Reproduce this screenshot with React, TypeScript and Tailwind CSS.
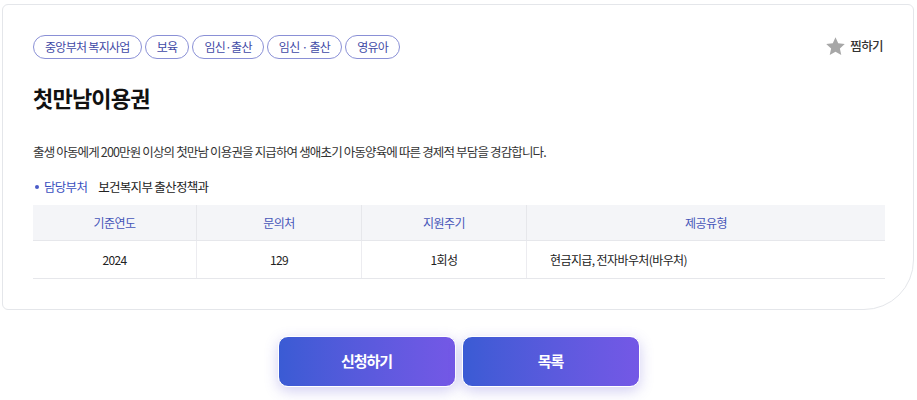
import React from "react";

const tags = ["중앙부처 복지사업", "보육", "임신·출산", "임신 · 출산", "영유아"];

export default function App() {
  return (
    <div
      className="w-[917px] h-[400px] bg-white overflow-hidden text-[#222]"
      style={{ fontFamily: '"Noto Sans CJK KR", "Noto Sans", sans-serif' }}
    >
      <div className="ml-[2px] mt-[4px] w-[912px] border border-[#e4e6ea] rounded-tl-[6px] rounded-tr-[6px] rounded-bl-[6px] rounded-br-[50px] bg-white pl-[30px] pr-[28px] pt-[30px] pb-[30px]">
        <div className="flex items-center justify-between">
          <div className="flex items-center gap-[3px]">
            {tags.map((t) => (
              <span
                key={t}
                className="h-[24px] flex items-center px-[11px] rounded-full border border-[#8a90d6] text-[#3f4aa6] text-[12px] tracking-[-0.7px] leading-none"
              >
                {t}
              </span>
            ))}
          </div>
          <div className="flex items-center gap-[4px] mt-[-1px] mr-[2px]">
            <svg width="21" height="21" viewBox="0 0 24 24">
              <polygon
                points="12,1.5 15.1,8.4 22.6,9.2 17,14.3 18.6,21.7 12,17.9 5.4,21.7 7,14.3 1.4,9.2 8.9,8.4"
                fill="#a7a7a7"
              />
            </svg>
            <span className="text-[12.5px] tracking-[-0.6px] font-medium text-[#333] leading-none">찜하기</span>
          </div>
        </div>

        <h1 className="mt-[22px] text-[22px] leading-[32px] font-bold tracking-[-0.8px] text-[#111]">
          첫만남이용권
        </h1>

        <p className="mt-[29px] text-[12.5px] leading-[20px] tracking-[-0.85px] text-[#333]">
          출생 아동에게 200만원 이상의 첫만남 이용권을 지급하여 생애초기 아동양육에 따른 경제적 부담을 경감합니다.
        </p>

        <div className="mt-[15px] flex items-center text-[12.5px] leading-[20px] tracking-[-0.7px]">
          <span className="ml-[2px] w-[4px] h-[4px] rounded-full bg-[#4a5bc8]" />
          <span className="ml-[5px] text-[#3a4fc0]">담당부처</span>
          <span className="ml-[11px] text-[#222]">보건복지부 출산정책과</span>
        </div>

        <div className="mt-[8px] text-[12px] tracking-[-0.6px]">
          <div className="grid grid-cols-[164px_165px_165px_1fr] h-[36px] bg-[#f4f5f8] border-b border-[#e6e7eb] text-[#4656b8]">
            <div className="flex items-center justify-center border-r border-[#e6e7eb]">기준연도</div>
            <div className="flex items-center justify-center border-r border-[#e6e7eb]">문의처</div>
            <div className="flex items-center justify-center border-r border-[#e6e7eb]">지원주기</div>
            <div className="flex items-center justify-center">제공유형</div>
          </div>
          <div className="grid grid-cols-[164px_165px_165px_1fr] h-[38px] border-b border-[#e6e7eb] text-[#222]">
            <div className="flex items-center justify-center border-r border-[#ececf0]">2024</div>
            <div className="flex items-center justify-center border-r border-[#ececf0]">129</div>
            <div className="flex items-center justify-center border-r border-[#ececf0]">1회성</div>
            <div className="flex items-center pl-[23px]">현금지급, 전자바우처(바우처)</div>
          </div>
        </div>
      </div>

      <div className="mt-[26px] flex justify-center gap-[6px]">
        <button className="w-[178px] h-[51px] rounded-[10px] border border-white bg-gradient-to-r from-[#3a5bd4] to-[#7458e6] text-white text-[15px] font-bold tracking-[-1px] shadow-[0_4px_14px_rgba(90,80,210,0.28)]">
          신청하기
        </button>
        <button className="w-[178px] h-[51px] rounded-[10px] border border-white bg-gradient-to-r from-[#3a5bd4] to-[#7458e6] text-white text-[15px] font-bold tracking-[-1px] shadow-[0_4px_14px_rgba(90,80,210,0.28)]">
          목록
        </button>
      </div>
    </div>
  );
}
